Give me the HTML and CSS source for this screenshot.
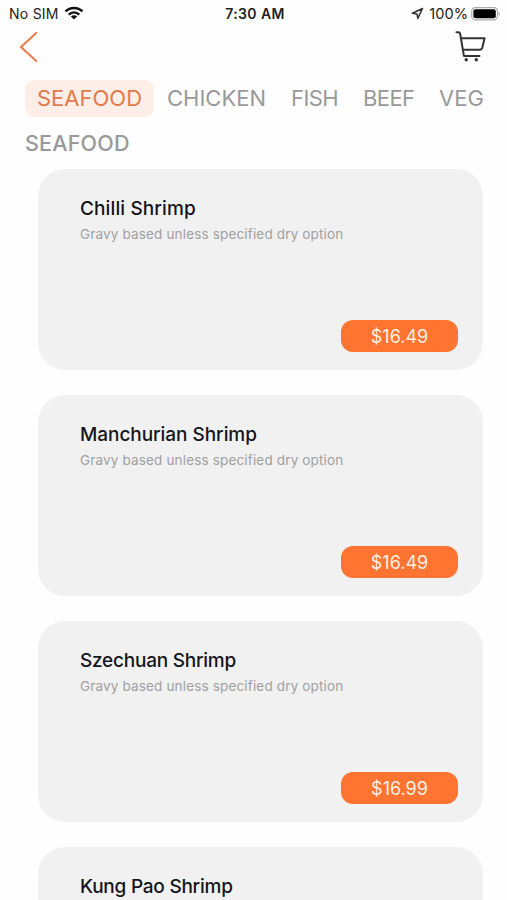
FILE: index.html
```html
<!DOCTYPE html>
<html lang="en">

<head>
  <meta charset="UTF-8">
  <meta name="viewport" content="width=device-width, initial-scale=1.0">
  <title>Menu</title>
  <link rel="stylesheet" href="styles.css">
</head>

<body>
  <div class="status">
    <div class="status-left">
      <span class="sim">No SIM</span>
      <svg class="wifi" width="20" height="14" viewBox="0 0 20 14" fill="none" stroke="#111" stroke-width="2.5">
        <path d="M1.5 5.4C6.2 .7 13.8 .7 18.5 5.4" />
        <path d="M4.7 8.6C7.8 5.7 12.2 5.7 15.3 8.6" />
        <path d="M10 13.6L6.8 10.5C8.7 8.9 11.3 8.9 13.2 10.5Z" fill="#111" stroke="none" />
      </svg>
    </div>
    <span class="time">7:30 AM</span>
    <div class="status-right">
      <svg width="13" height="13" viewBox="0 0 13 13" fill="none" stroke="#333" stroke-width="1.5" stroke-linejoin="round">
        <path d="M11.5 1.5L1.4 6.2L6 6.9L6.8 11.4Z" />
      </svg>
      <span class="percent">100%</span>
      <svg width="30" height="14" viewBox="0 0 30 14">
        <rect x=".7" y=".7" width="25.8" height="12.2" rx="3.6" fill="#fff" stroke="#aaa" stroke-width="1.2" />
        <rect x="2.4" y="2.3" width="22.4" height="9" rx="2" fill="#000" />
        <path d="M27.7 4.8C29.4 5.5 29.4 8.1 27.7 8.8Z" fill="#aaa" />
      </svg>
    </div>
  </div>

  <header class="topbar">
    <svg width="20" height="32" viewBox="0 0 20 32" fill="none" stroke="#ed7f4e" stroke-width="2.2" stroke-linecap="round">
      <path d="M17.2 2L2 16L17.2 30" />
    </svg>
    <svg width="32" height="32" viewBox="0 0 32 32" fill="none" stroke="#333" stroke-width="2" stroke-linecap="round" stroke-linejoin="round">
      <path d="M1.5 1.3H3.2Q4.8 1.3 5.2 3L8.9 24.9H24.5" />
      <path d="M6.2 7.2H29.6L27.2 17Q26.7 18.8 24.6 18.8H8" />
      <circle cx="11.2" cy="28.7" r="1.7" fill="#333" stroke="none" />
      <circle cx="21.3" cy="28.7" r="1.7" fill="#333" stroke="none" />
    </svg>
  </header>

  <nav class="tabs">
    <a class="tab active">SEAFOOD</a>
    <a class="tab chicken">CHICKEN</a>
    <a class="tab fish">FISH</a>
    <a class="tab beef">BEEF</a>
    <a class="tab">VEG</a>
  </nav>

  <main>
    <h1>SEAFOOD</h1>
    <div class="list">
      <div class="card">
        <h2 class="wide">Chilli Shrimp</h2>
        <p>Gravy based unless specified dry option</p>
        <span class="price">$16.49</span>
      </div>
      <div class="card">
        <h2>Manchurian Shrimp</h2>
        <p>Gravy based unless specified dry option</p>
        <span class="price">$16.49</span>
      </div>
      <div class="card">
        <h2 class="tight">Szechuan Shrimp</h2>
        <p>Gravy based unless specified dry option</p>
        <span class="price">$16.99</span>
      </div>
      <div class="card last">
        <h2 class="tight">Kung Pao Shrimp</h2>
      </div>
    </div>
  </main>
</body>

</html>
```
FILE: styles.css
```css
* {
  margin: 0;
  padding: 0;
  box-sizing: border-box;
}

body {
  height: 900px;
  overflow: hidden;
  background-color: #fefefe;
  font-family: Inter, "Liberation Sans", sans-serif;
}

svg {
  display: block;
  flex-shrink: 0;
}

.status {
  display: grid;
  grid-template-columns: 1fr auto 1fr;
  align-items: center;
  height: 27px;
  padding: 0 6px 0 9px;
  font-size: 14px;
  color: #222;
}

.status-left,
.status-right {
  display: flex;
  align-items: center;
}

.status-left {
  gap: 5px;
}

.sim {
  letter-spacing: .25px;
}

.wifi {
  margin-top: -2px;
}

.status-right {
  justify-content: flex-end;
  gap: 5px;
}

.percent {
  margin-right: -2px;
  font-size: 14.6px;
}

.time {
  letter-spacing: .4px;
  font-weight: 600;
}

.topbar {
  display: flex;
  justify-content: space-between;
  height: 53px;
  padding: 4px 20px 0 19px;
}

.tabs {
  display: flex;
  height: 37px;
  padding-left: 25px;
  overflow: hidden;
}

.tab {
  flex-shrink: 0;
  padding: 0 13px;
  font-size: 22px;
  line-height: 37px;
  color: #999;
}

.tab.active {
  width: 129px;
  padding: 0 12px;
  border-radius: 9px;
  background-color: #fdeee8;
  color: #e27a4b;
}

.chicken {
  width: 124px;
}

.fish {
  width: 73px;
  letter-spacing: -.6px;
}

.beef {
  width: 75px;
  padding-left: 12px;
  letter-spacing: -.6px;
}

h1 {
  padding-left: 25px;
  font-size: 21.5px;
  font-weight: 500;
  letter-spacing: .2px;
  line-height: 52px;
  color: #999;
}

.list {
  display: flex;
  flex-direction: column;
  gap: 25px;
  padding: 0 24px 0 38px;
}

.card {
  display: flex;
  flex-direction: column;
  height: 201px;
  padding: 26px 25px 18px 42px;
  border-radius: 27px;
  background-color: #f1f1f1;
}

.card.last {
  height: 53px;
  border-radius: 27px 27px 0 0;
}

.card h2 {
  font-size: 19px;
  font-weight: 500;
  letter-spacing: -.05px;
  line-height: 28px;
  color: #15151b;
}

.card .wide {
  letter-spacing: .12px;
}

.card .tight {
  letter-spacing: -.24px;
}

.card p {
  font-size: 13.5px;
  letter-spacing: .16px;
  line-height: 23px;
  color: #a0a0a0;
}

.price {
  align-self: flex-end;
  width: 117px;
  height: 32px;
  margin-top: auto;
  border-radius: 12px;
  background-color: #ff7430;
  font-size: 18px;
  line-height: 34px;
  text-align: center;
  color: #fff0e6;
}
```
